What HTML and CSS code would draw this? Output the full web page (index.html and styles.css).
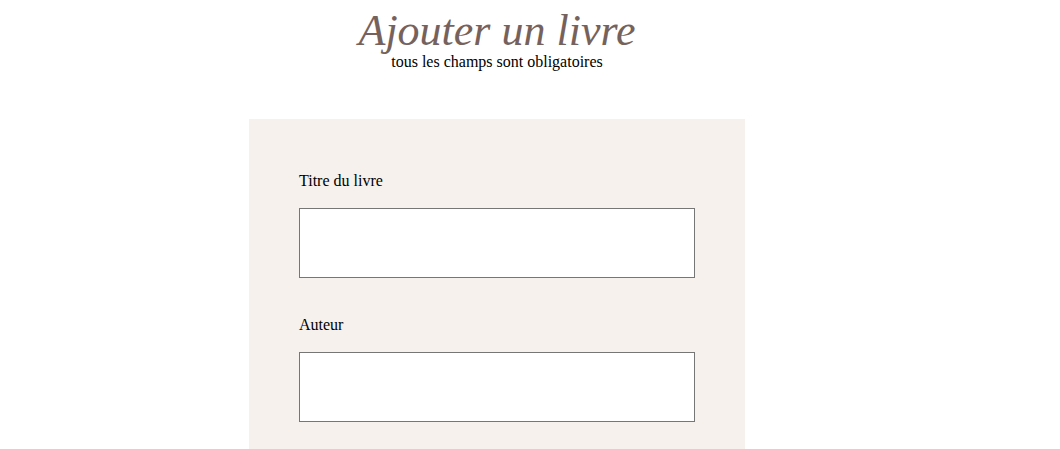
FILE: index.html
```html
<!DOCTYPE html>
<html lang="fr">
<head>
<meta charset="utf-8">
<title>Ajouter un livre</title>
<link rel="stylesheet" href="styles.css">
</head>
<body>
<div class="wrap">
  <header class="head">
    <h1 class="title">Ajouter un livre</h1>
    <p class="sub">tous les champs sont obligatoires</p>
  </header>
  <form class="card">
    <div class="field">
      <label class="label" for="titre">Titre du livre</label>
      <input class="input" id="titre" type="text">
    </div>
    <div class="field">
      <label class="label" for="auteur">Auteur</label>
      <input class="input" id="auteur" type="text">
    </div>
  </form>
</div>
</body>
</html>
```

FILE: styles.css
```css
html, body {
  margin: 0;
  padding: 0;
  background: #ffffff;
}
body {
  font-family: "Liberation Serif", "Times New Roman", serif;
  font-size: 16px;
  color: #000;
}
.wrap {
  width: 496px;
  margin-left: 249px;
}
.head {
  text-align: center;
  padding-top: 7px;
  height: 112px;
}
.title {
  margin: 0;
  font-size: 44px;
  font-weight: normal;
  font-style: italic;
  line-height: 48px;
  color: #76625c;
}
.sub {
  margin: -2px 0 0;
  line-height: 18px;
}
.card {
  background: #f6f1ec;
  padding: 53px 50px 0;
  height: 400px;
}
.field {
  display: flex;
  flex-direction: column;
  margin-bottom: 38px;
}
.label {
  line-height: 18px;
  margin-bottom: 18px;
}
.input {
  box-sizing: border-box;
  width: 396px;
  height: 70px;
  margin: 0;
  border: 1px solid #767676;
  border-radius: 0;
  background: #fff;
  font: inherit;
  padding: 0 4px;
}
```
